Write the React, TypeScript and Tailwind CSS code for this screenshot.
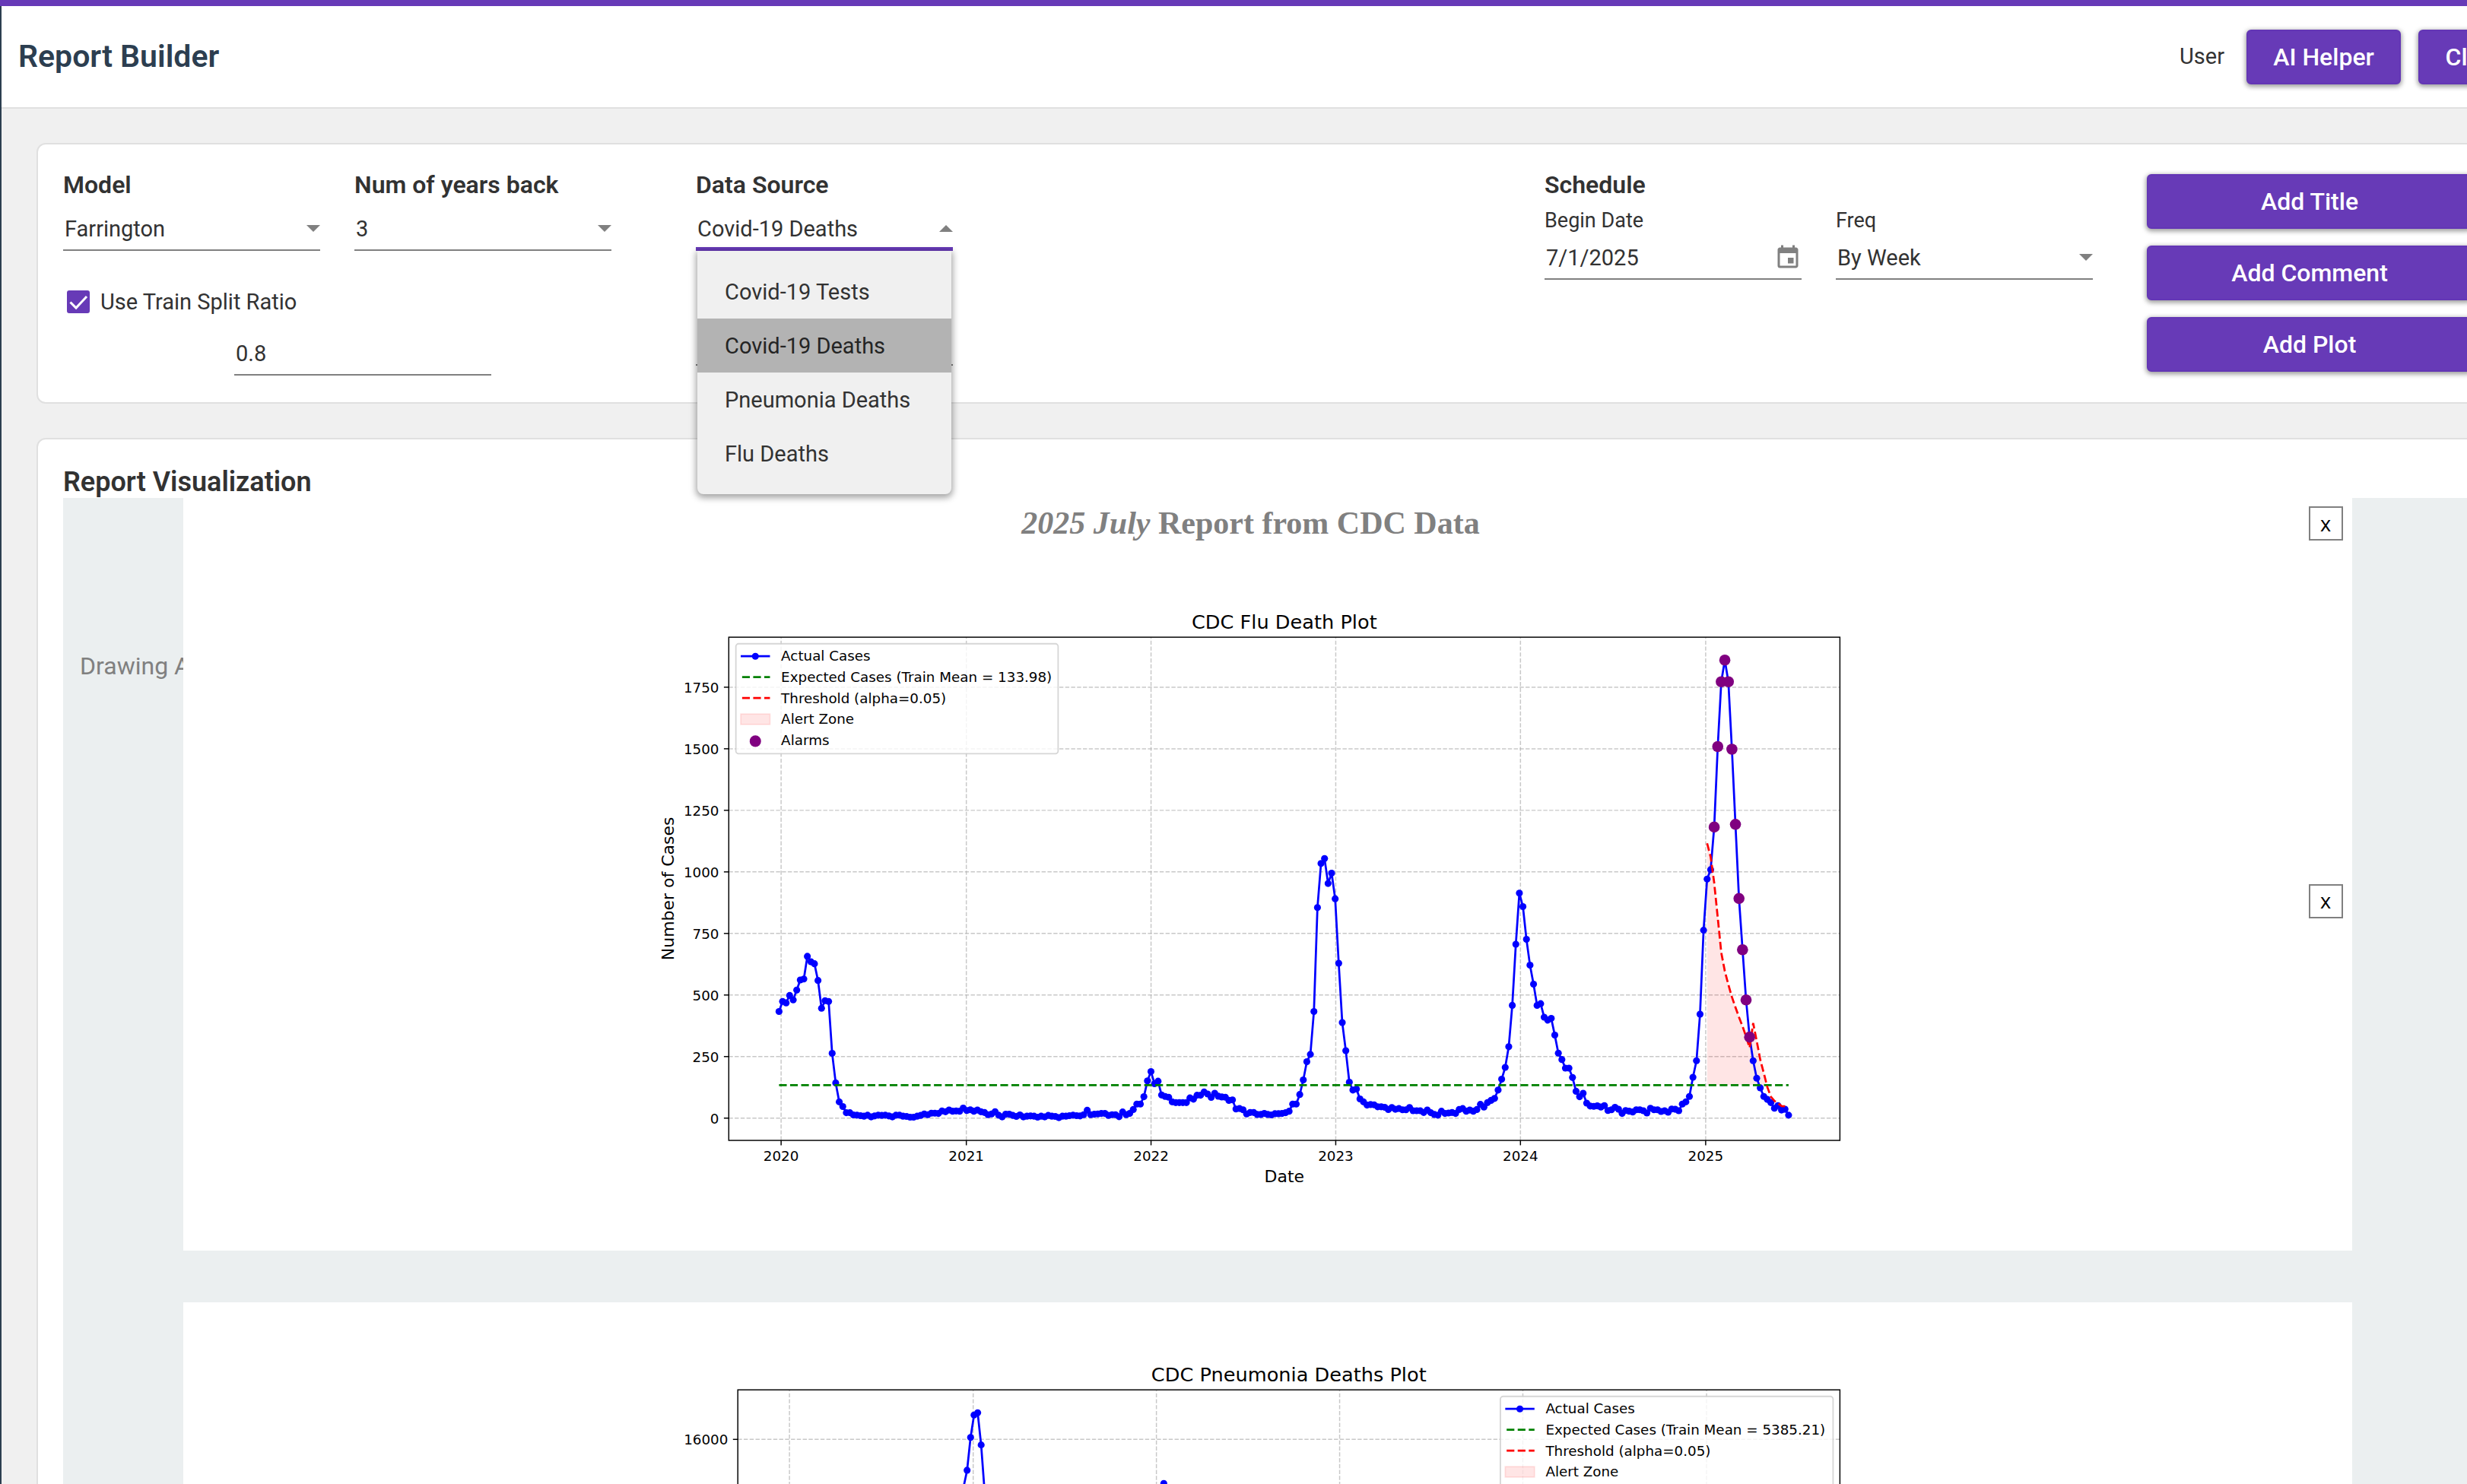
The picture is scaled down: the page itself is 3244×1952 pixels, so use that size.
import { useId, type ReactNode } from "react";
import { MdEvent } from "react-icons/md";

type Point = [number, number];

const FLU_DEATHS = [
  433, 474, 468, 498, 480, 520, 561, 565, 657, 635, 627, 559, 446, 477, 474, 263, 143, 66, 47, 22,
  22, 13, 12, 10, 8, 12, 5, 9, 12, 11, 12, 9, 5, 12, 12, 8, 7, 4, 4, 8,
  11, 17, 14, 20, 20, 19, 29, 26, 33, 28, 29, 28, 41, 31, 34, 28, 33, 26, 23, 14,
  17, 26, 12, 5, 16, 16, 11, 7, 13, 5, 8, 9, 8, 4, 8, 5, 11, 8, 7, 2,
  8, 8, 10, 12, 10, 9, 14, 32, 14, 16, 17, 19, 19, 11, 14, 14, 6, 25, 14, 19,
  35, 57, 57, 87, 151, 189, 140, 150, 94, 88, 85, 66, 63, 63, 63, 63, 82, 77, 93, 93,
  106, 98, 84, 101, 89, 86, 85, 72, 74, 37, 39, 34, 17, 23, 23, 15, 15, 19, 15, 13,
  18, 18, 19, 22, 28, 57, 57, 96, 155, 229, 259, 433, 855, 1034, 1054, 953, 995, 891, 629, 388,
  274, 146, 114, 118, 78, 66, 53, 55, 54, 46, 46, 44, 35, 43, 36, 39, 34, 34, 43, 30,
  30, 30, 23, 33, 22, 15, 12, 28, 19, 21, 23, 19, 35, 39, 28, 33, 28, 35, 56, 45,
  63, 72, 80, 114, 158, 206, 290, 458, 706, 914, 859, 726, 621, 544, 458, 465, 410, 398, 405, 337,
  264, 238, 203, 203, 165, 109, 87, 101, 61, 49, 48, 50, 45, 51, 31, 34, 44, 36, 19, 31,
  28, 25, 34, 34, 30, 21, 40, 34, 34, 27, 30, 24, 37, 36, 30, 57, 66, 88, 166, 233,
  422, 763, 971, 1009, 1182, 1509, 1772, 1860, 1772, 1498, 1193, 892, 684, 480, 329, 233, 162, 123, 88, 76,
  63, 40, 51, 33, 36, 12,
];
const THRESHOLD_START = 262;
const THRESHOLD = [
  1116, 1061, 956, 814, 672, 597, 542, 492, 450, 410, 373, 331, 286, 386, 313, 238, 183, 126, 87, 70, 61, 49, 48,
];
const ALARM_START = 264;
const ALARM_END = 274;
const TRAIN_MEAN = 133.98;
const YEAR_STARTS = [0, 366, 731, 1096, 1461, 1827];

const toPoints = (points: Point[]) => points.map(([x, y]) => `${x.toFixed(2)},${y.toFixed(2)}`).join(" ");

function Legend({ x, y, width, mean }: { x: number; y: number; width: number; mean: string }) {
  const labels = ["Actual Cases", `Expected Cases (Train Mean = ${mean})`, "Threshold (alpha=0.05)", "Alert Zone", "Alarms"];
  return (
    <g transform={`translate(${x} ${y})`}>
      <rect width={width} height={79} rx={2} fill="#fff" fillOpacity={0.8} stroke="#ccc" strokeOpacity={0.8} strokeWidth={1} />
      <path d="M3.5 9H24.5" stroke="blue" strokeWidth={1.5} />
      <circle cx={14} cy={9} r={2.5} fill="blue" />
      <path d="M4.5 24H24.5" stroke="green" strokeWidth={1.5} strokeDasharray="5.55 2.4" />
      <path d="M4.5 39H24.5" stroke="red" strokeWidth={1.5} strokeDasharray="5.55 2.4" />
      <rect x={3.5} y={50.5} width={21} height={7.5} fill="red" fillOpacity={0.1} stroke="red" strokeOpacity={0.1} />
      <circle cx={14} cy={70} r={4.1} fill="purple" />
      {labels.map((label, i) => (
        <text key={label} x={32.5} y={12.3 + i * 15.1} fontSize={10}>
          {label}
        </text>
      ))}
    </g>
  );
}

function Plot({
  title,
  left,
  xTicks,
  yTicks,
  children,
}: {
  title: string;
  left: number;
  xTicks: { x: number; label: string }[];
  yTicks: { y: number; label: string }[];
  children: ReactNode;
}) {
  const clip = useId();
  const top = 26.3;
  const right = 866.1;
  const bottom = 387.9;
  const center = (left + right) / 2;
  return (
    <svg viewBox="0 0 885 432" className="h-auto w-[1620px] shrink-0 font-['DejaVu_Sans',sans-serif]" role="img" aria-label={title}>
      <clipPath id={clip}>
        <rect x={left} y={top} width={right - left} height={bottom - top} />
      </clipPath>
      <g stroke="#b0b0b0" strokeOpacity={0.7} strokeWidth={0.8} strokeDasharray="2.96 1.28">
        {xTicks.map((t) => (
          <path key={t.label} d={`M${t.x} ${bottom}V${top}`} />
        ))}
        {yTicks.map((t) => (
          <path key={t.label} d={`M${left} ${t.y}H${right}`} />
        ))}
      </g>
      <g stroke="#000" strokeWidth={0.8}>
        {xTicks.map((t) => (
          <path key={t.label} d={`M${t.x} ${bottom}v3.5`} />
        ))}
        {yTicks.map((t) => (
          <path key={t.label} d={`M${left} ${t.y}h-3.5`} />
        ))}
      </g>
      {xTicks.map((t) => (
        <text key={t.label} x={t.x} y={bottom + 15} textAnchor="middle" fontSize={10}>
          {t.label}
        </text>
      ))}
      {yTicks.map((t) => (
        <text key={t.label} x={left - 7} y={t.y + 3.7} textAnchor="end" fontSize={10}>
          {t.label}
        </text>
      ))}
      <text x={center} y={20.3} textAnchor="middle" fontSize={14}>
        {title}
      </text>
      <text x={center} y={418} textAnchor="middle" fontSize={12}>
        Date
      </text>
      <text x={28.5} y={207} textAnchor="middle" fontSize={12} transform="rotate(-90 28.5 207)">
        Number of Cases
      </text>
      <rect x={left} y={top} width={right - left} height={bottom - top} fill="none" stroke="#000" strokeWidth={0.8} />
      <g clipPath={`url(#${clip})`}>{children}</g>
    </svg>
  );
}

function FluPlot() {
  const px = (i: number) => 104 + i * 2.5447;
  const py = (v: number) => 371.9 - v * 0.17695;
  const cases = FLU_DEATHS.map((v, i): Point => [px(i), py(v)]);
  const threshold = THRESHOLD.map((v, i): Point => [px(THRESHOLD_START + i), py(v)]);
  const zone: Point[] = [...threshold.slice(0, 17), [px(278.8), py(TRAIN_MEAN)], [px(THRESHOLD_START), py(TRAIN_MEAN)]];
  return (
    <Plot
      title="CDC Flu Death Plot"
      left={67.9}
      xTicks={YEAR_STARTS.map((d, i) => ({ x: 105.5 + d * 0.36353, label: String(2020 + i) }))}
      yTicks={[0, 250, 500, 750, 1000, 1250, 1500, 1750].map((v) => ({ y: py(v), label: String(v) }))}
    >
      <polygon points={toPoints(zone)} fill="red" fillOpacity={0.1} />
      <polyline points={toPoints(cases)} fill="none" stroke="blue" strokeWidth={1.5} strokeLinejoin="round" />
      {cases.map(([x, y], i) => (
        <circle key={i} cx={x} cy={y} r={2.5} fill="blue" />
      ))}
      <path d={`M${px(0)} ${py(TRAIN_MEAN)}H${px(285)}`} stroke="green" strokeWidth={1.5} strokeDasharray="5.55 2.4" />
      <polyline points={toPoints(threshold)} fill="none" stroke="red" strokeWidth={1.5} strokeDasharray="5.55 2.4" />
      {cases.slice(ALARM_START, ALARM_END + 1).map(([x, y]) => (
        <circle key={x} cx={x} cy={y} r={4} fill="purple" />
      ))}
      <Legend x={73} y={31} width={231.5} mean="133.98" />
    </Plot>
  );
}

function PneumoniaPlot() {
  const first: Point[] = [
    [236.4, 97],
    [239.1, 84.1],
    [241.6, 60.5],
    [244.1, 44.4],
    [246.7, 42.8],
    [249.2, 65.9],
    [251.5, 97],
  ];
  const second: Point[] = [
    [377.9, 100],
    [380.4, 93.6],
    [382.9, 100],
  ];
  return (
    <Plot
      title="CDC Pneumonia Deaths Plot"
      left={74.4}
      xTicks={YEAR_STARTS.map((d, i) => ({ x: 111.5 + d * 0.3606, label: String(2020 + i) }))}
      yTicks={[{ y: 61.9, label: "16000" }]}
    >
      {[first, second].map((line, i) => (
        <g key={i} fill="blue">
          <polyline points={toPoints(line)} fill="none" stroke="blue" strokeWidth={1.5} />
          {line.map(([x, y]) => (
            <circle key={x} cx={x} cy={y} r={2.5} />
          ))}
        </g>
      ))}
      <Legend x={622.2} y={31} width={239} mean="5385.21" />
    </Plot>
  );
}

function SelectField({ id, label, options, value, open }: { id: string; label?: string; options: string[]; value: string; open?: boolean }) {
  return (
    <div className="relative w-[338px]">
      <select
        id={id}
        aria-label={label}
        defaultValue={value}
        className={
          open
            ? "block h-[56px] w-full appearance-none border-b-[5px] border-[#673ab7] bg-transparent pt-[5px] pl-[2px] text-[29px] outline-none"
            : "block h-[56px] w-full appearance-none border-b-2 border-[#808080] bg-transparent pt-[2px] pl-[2px] text-[29px] outline-none"
        }
      >
        {options.map((o) => (
          <option key={o}>{o}</option>
        ))}
      </select>
      <svg viewBox="0 0 18 9" className="pointer-events-none absolute top-[22px] right-0 h-[9px] w-[18px] fill-[#808080]" aria-hidden="true">
        <path d={open ? "M0 9L9 0L18 9Z" : "M0 0H18L9 9Z"} />
      </svg>
    </div>
  );
}

function PurpleButton({ children, width }: { children: ReactNode; width: string }) {
  return (
    <button
      type="button"
      className={`h-[72px] rounded-md border-2 border-[#6336b5] bg-[#673ab7] text-[32px] leading-[40px] font-medium text-white shadow-[0_2px_6px_1px_rgba(0,0,0,0.4)] ${width}`}
    >
      {children}
    </button>
  );
}

function RemoveButton({ label }: { label: string }) {
  return (
    <button
      type="button"
      aria-label={label}
      className="flex size-[45px] shrink-0 items-center justify-center border-2 border-[#808080] bg-white font-['Open_Sans',sans-serif] text-[27px] leading-[30px] text-black"
    >
      x
    </button>
  );
}

const SOURCES = ["Covid-19 Tests", "Covid-19 Deaths", "Pneumonia Deaths", "Flu Deaths"];
const LABEL = "mb-[10px] block text-[32px] leading-[42px] font-semibold";

export default function App() {
  return (
    <div className="h-screen overflow-hidden border-t-8 border-[#673ab7] bg-[#f0f0f0] font-['Roboto',sans-serif] text-[#323232]">
      <div className="w-[calc(100%+88px)] border-l-2 border-[#2c3e50]">
        <header className="flex h-[135px] items-center justify-between border-b-2 border-[#e0e0e0] bg-white pl-[22px]">
          <h1 className="text-[41px] font-semibold text-[#2c3e50]">Report Builder</h1>
          <div className="flex items-center">
            <span className="mr-[29px] text-[29px]">User</span>
            <div className="flex gap-[23px]">
              <PurpleButton width="w-[203px]">AI Helper</PurpleButton>
              <PurpleButton width="w-[152px]">Close</PurpleButton>
            </div>
          </div>
        </header>

        <main className="flex flex-col gap-[45px] px-[46px] pt-[45px]">
          <section className="flex rounded-xl border-2 border-[#e0e0e0] bg-white px-[33px] pt-[32px] pb-[35px]">
            <div>
              <div className="flex gap-[45px]">
                <div>
                  <label htmlFor="model" className={LABEL}>Model</label>
                  <SelectField id="model" options={["Farrington"]} value="Farrington" />
                </div>
                <div>
                  <label htmlFor="years" className={LABEL}>Num of years back</label>
                  <SelectField id="years" options={["1", "2", "3", "4", "5"]} value="3" />
                </div>
              </div>
              <label className="mt-[46px] ml-[5px] flex h-[42px] items-center gap-[14px] text-[29px]">
                <span className="relative size-[30px]">
                  <input type="checkbox" defaultChecked className="peer block size-[30px] appearance-none rounded-[3px] border-2 border-[#673ab7] checked:bg-[#673ab7]" />
                  <svg viewBox="0 0 30 30" className="pointer-events-none absolute inset-0 hidden peer-checked:block" fill="none" stroke="#fff" strokeWidth={3} aria-hidden="true">
                    <path d="M4.5 15.5L12 23L26 8" />
                  </svg>
                </span>
                <span className="pt-[2px]">Use Train Split Ratio</span>
              </label>
              <input
                aria-label="Train split ratio"
                defaultValue="0.8"
                className="mt-[20px] ml-[225px] block h-[56px] w-[338px] border-b-2 border-[#808080] bg-transparent pl-[2px] text-[29px] outline-none"
              />
            </div>

            <div className="ml-[111px]">
              <label htmlFor="source" className={LABEL}>Data Source</label>
              <div className="relative">
                <SelectField id="source" options={SOURCES} value="Covid-19 Deaths" open />
                <ul
                  role="listbox"
                  aria-label="Data Source options"
                  className="absolute top-full left-[2px] z-10 w-[334px] rounded-b-lg bg-[#f0f0f0] py-[18px] shadow-[0_3px_8px_2px_rgba(0,0,0,0.35)]"
                >
                  {SOURCES.map((s) => (
                    <li
                      key={s}
                      role="option"
                      aria-selected={s === "Covid-19 Deaths"}
                      className="h-[71px] pt-[2px] pl-[36px] text-[29px] leading-[69px] aria-selected:bg-[#b3b3b3] aria-selected:text-[#242424]"
                    >
                      {s}
                    </li>
                  ))}
                </ul>
              </div>
              <input aria-label="Source filter" className="mt-[95px] block h-[56px] w-[338px] border-b-2 border-[#808080] bg-transparent text-[29px] outline-none" />
            </div>

            <div className="ml-auto">
              <h2 className="text-[32px] leading-[42px] font-semibold">Schedule</h2>
              <div className="mt-[8px] flex gap-[45px]">
                <div>
                  <label htmlFor="begin" className="mb-[4px] block text-[27px] leading-[36px]">Begin Date</label>
                  <div className="flex h-[56px] w-[338px] items-center border-b-2 border-[#808080]">
                    <input id="begin" defaultValue="7/1/2025" className="min-w-0 flex-1 bg-transparent pt-[2px] pl-[2px] text-[29px] outline-none" />
                    <button type="button" aria-label="Open calendar">
                      <MdEvent className="size-[36px] text-[#808080]" />
                    </button>
                  </div>
                </div>
                <div>
                  <label htmlFor="freq" className="mb-[4px] block text-[27px] leading-[36px]">Freq</label>
                  <SelectField id="freq" options={["By Day", "By Week", "By Month"]} value="By Week" />
                </div>
              </div>
            </div>

            <div className="mt-[7px] ml-[71px] flex flex-col gap-[22px]">
              <PurpleButton width="w-[428px]">Add Title</PurpleButton>
              <PurpleButton width="w-[428px]">Add Comment</PurpleButton>
              <PurpleButton width="w-[428px]">Add Plot</PurpleButton>
            </div>
          </section>

          <section className="rounded-xl border-2 border-[#e0e0e0] bg-white px-[33px] pt-[34px]">
            <h2 className="pt-[2px] text-[36px] leading-[41px] font-semibold">Report Visualization</h2>
            <div className="flex bg-[#ebeff0]">
              <p className="w-[5%] overflow-hidden pt-[200px] pl-[22px] text-[32px] leading-[42px] whitespace-nowrap text-[#808080]">Drawing Area</p>
              <div className="flex w-[90%] flex-col gap-[68px]">
                <article className="h-[990px] bg-white pt-[11px] pr-[12px] pl-[12px]">
                  <div className="flex items-center">
                    <h3 className="flex-1 text-center font-['Liberation_Serif',serif] text-[42px] leading-[45px] font-bold text-[#808080]">
                      <em>2025 July</em> Report from CDC Data
                    </h3>
                    <RemoveButton label="Remove title" />
                  </div>
                  <div className="mt-[79px] flex items-center">
                    <div className="flex flex-1 justify-center">
                      <FluPlot />
                    </div>
                    <RemoveButton label="Remove flu plot" />
                  </div>
                </article>
                <article className="h-[990px] bg-white pt-[67px] pr-[12px] pl-[12px]">
                  <div className="flex items-center">
                    <div className="flex flex-1 justify-center">
                      <PneumoniaPlot />
                    </div>
                    <RemoveButton label="Remove pneumonia plot" />
                  </div>
                </article>
              </div>
            </div>
          </section>
        </main>
      </div>
    </div>
  );
}
